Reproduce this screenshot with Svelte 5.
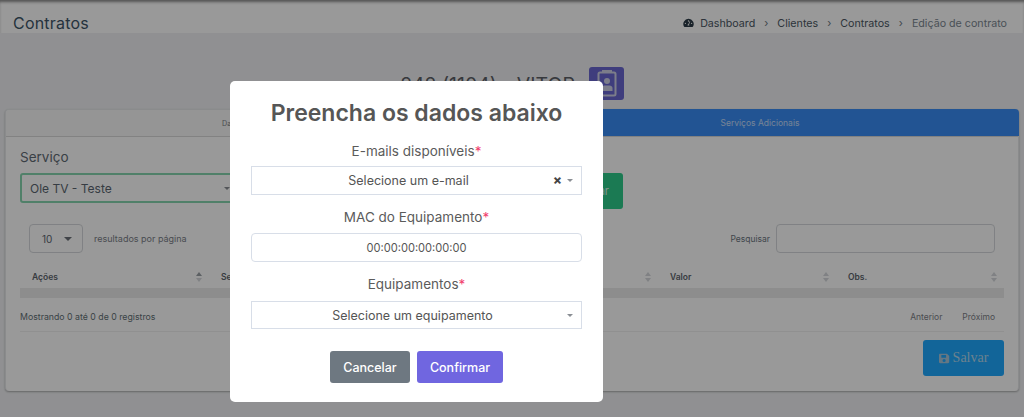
<script>
  const heads = [
    { label: 'Ações', up: true },
    { label: 'Serviço' },
    { label: '' },
    { label: '' },
    { label: 'Valor' },
    { label: 'Obs.' }
  ];
</script>

<div class="page">
  <header class="topbar">
    <h1>Contratos</h1>
    <nav class="crumbs">
      <svg class="gauge" viewBox="0 0 16 14" width="11" height="10"><path fill="#2a3a46" d="M8 1a7.500 7.500 0 0 0-6.600 11.200c.2.300.5.500.9.500h11.400c.4 0 .7-.2.9-.5A7.500 7.500 0 0 0 8 1zm0 2a1 1 0 1 1 0 2 1 1 0 0 1 0-2zM3.500 8.500a1 1 0 1 1 0-2 1 1 0 0 1 0 2zm5.600 2.200H6.900a1.400 1.400 0 0 1 .8-2l2-4.400.9.400-1.900 4.400c.5.400.6 1 .4 1.600zm3.400-2.200a1 1 0 1 1 0-2 1 1 0 0 1 0 2z"/></svg>
      <span>Dashboard</span><i>›</i><span>Clientes</span><i>›</i><span>Contratos</span><i>›</i><span class="muted">Edição de contrato</span>
    </nav>
  </header>

  <div class="client">
    <span class="client-name">242 (1104) - VITOR</span>
    <span class="badge">
      <svg viewBox="0 0 20 27" width="20" height="27" fill="none"><rect x="1.500" y="2.500" width="17" height="23" rx="1.500" stroke="#cfd0e6" stroke-width="2"/><path d="M6 2.500V1h8v1.500" stroke="#cfd0e6" stroke-width="2"/><circle cx="10" cy="11" r="3" fill="#cfd0e6"/><path d="M4.500 21v-3c0-1.500 1.500-2.500 3-2.500h5c1.500 0 3 1 3 2.500v3z" fill="#cfd0e6"/></svg>
    </span>
  </div>

  <section class="card">
    <div class="tabs">
      <div class="tab">Dados do contrato</div>
      <div class="tab active">Serviços Adicionais</div>
    </div>
    <div class="card-body">
      <div class="service-row">
        <div class="service-field">
          <div class="service-label">Serviço</div>
          <div class="service-select"><span>Ole TV - Teste</span><b class="caret small"></b></div>
        </div>
        <button class="add">Adicionar</button>
      </div>

      <div class="controls">
        <div class="length"><span>10</span><b class="caret"></b></div>
        <span class="per-page">resultados por página</span>
        <span class="search-label">Pesquisar</span>
        <div class="search"></div>
      </div>

      <div class="thead">
        {#each heads as h}
          <div class="th">
            <span>{h.label}</span>
            <span class="sort"><b class:up={h.up}></b><b></b></span>
          </div>
        {/each}
      </div>
      <div class="empty-row"></div>
      <div class="tfoot">
        <span>Mostrando 0 até 0 de 0 registros</span>
        <span class="pager"><span>Anterior</span><span>Próximo</span></span>
      </div>
      <div class="actions">
        <button class="save">
          <svg viewBox="0 0 14 14" width="11" height="11"><path fill="#a9c6da" fill-rule="evenodd" d="M1.500 1h8.700L13 3.800v7.700c0 .8-.7 1.500-1.500 1.500h-10C.7 13 0 12.300 0 11.500v-9C0 1.700.7 1 1.500 1zM3 2.500V6h6V2.500zM6.500 7.500a2 2 0 1 0 0 4 2 2 0 0 0 0-4z"/></svg>
          Salvar
        </button>
      </div>
    </div>
  </section>
</div>

<div class="overlay">
  <div class="modal">
    <h2>Preencha os dados abaixo</h2>
    <label class="lbl">E-mails disponíveis<em>*</em></label>
    <div class="sel first">
      <span>Selecione um e-mail</span>
      <span class="sel-icons"><b class="x">×</b><b class="caret small"></b></span>
    </div>
    <label class="lbl">MAC do Equipamento<em>*</em></label>
    <div class="inp">00:00:00:00:00:00</div>
    <label class="lbl">Equipamentos<em>*</em></label>
    <div class="sel short">
      <span>Selecione um equipamento</span>
      <span class="sel-icons"><b class="caret small"></b></span>
    </div>
    <div class="btns">
      <button class="cancel">Cancelar</button>
      <button class="confirm">Confirmar</button>
    </div>
  </div>
</div>

<style>
  :global(body) {
    margin: 0;
    background: #f0f1f3;
    font-family: "Inter", "Open Sans", sans-serif;
    overflow: hidden;
  }
  .page { height: 417px; color: #4a5560; }
  .topbar {
    height: 33px;
    background: #fff;
    box-sizing: border-box;
    padding: 13px 17px 0 13px;
    display: flex;
    align-items: center;
    justify-content: space-between;
    box-shadow: inset 0 3px 3px -1px rgba(0,0,0,.45);
  }
  h1 { margin: 0; font-size: 16px; font-weight: 400; color: #3d5568; letter-spacing: .2px; }
  .crumbs { display: flex; align-items: center; font-size: 10.700px; color: #4b5763; }
  .crumbs i { font-style: normal; margin: 0 9px; color: #6b7680; }
  .crumbs .gauge { margin-right: 6px; }
  .crumbs .muted { color: #7c8791; }
  .client {
    height: 76px;
    box-sizing: border-box;
    padding: 34px 400px 0 0;
    display: flex;
    justify-content: flex-end;
    align-items: flex-start;
    gap: 14px;
  }
  .client-name { font-size: 19.500px; color: #5c5f66; margin-top: 5px; line-height: 26px; }
  .badge {
    width: 35px;
    height: 33px;
    border-radius: 3px;
    background: #6a67d0;
    display: flex;
    align-items: center;
    justify-content: center;
  }
  .card {
    margin: 0 5px;
    height: 282px;
    background: #fff;
    border-radius: 4px;
    box-sizing: border-box;
    box-shadow: 0 1px 2px rgba(0,0,0,.3);
    border: 1px solid #e6e8ea;
    border-bottom: 0;
  }
  .tabs { display: grid; grid-template-columns: 495px 1fr; height: 26px; border-bottom: 1px solid #d9d9d9; }
  .tab { background: #f8f8f8; font-size: 7.200px; color: #7a7f86; display: flex; align-items: center; justify-content: center; border-radius: 4px 0 0 0; }
  .tab.active { background: #3a8df6; color: #c5dcf9; font-size: 8.500px; border-radius: 0 4px 0 0; margin-top: -1px; margin-right: -1px; }
  .card-body { padding: 0 14px; }
  .service-row { display: flex; align-items: flex-end; justify-content: space-between; width: 603px; height: 72px; }
  .service-field { width: 220px; }
  .service-label { font-size: 13.500px; color: #5f6b75; margin-bottom: 8px; line-height: 16px; }
  .service-select {
    height: 30px;
    box-sizing: border-box;
    border: 2px solid #86d6af;
    border-radius: 3px;
    font-size: 12px;
    color: #5a6570;
    padding: 0 8px;
    display: flex;
    align-items: center;
    justify-content: space-between;
    margin-bottom: 6px;
  }
  .add {
    width: 80px;
    height: 36px;
    border: 0;
    border-radius: 3px;
    background: #2dcb8b;
    color: #d8f5e9;
    font: 11px "Inter", sans-serif;
    text-align: right;
    padding: 0 14px 0 0;
  }
  .controls { display: flex; align-items: center; height: 29px; margin-top: 15px; padding: 0 9px; }
  .length {
    width: 54px;
    height: 29px;
    box-sizing: border-box;
    border: 1px solid #d5d8dc;
    border-radius: 4px;
    display: flex;
    align-items: center;
    justify-content: space-between;
    padding: 0 10px 0 12px;
    font-size: 10px;
    color: #5a6570;
  }
  .per-page { margin-left: 11px; font-size: 9px; color: #7b8088; }
  .search-label { margin-left: auto; margin-right: 6px; font-size: 8.500px; color: #6a7580; }
  .search { width: 219px; height: 29px; box-sizing: border-box; border: 1px solid #d5d8dc; border-radius: 4px; }
  .caret { width: 0; height: 0; border: 4px solid transparent; border-top-color: #6c7178; border-bottom: 0; display: block; }
  .caret.small { border-width: 3.500px; border-top-color: #8a8e94; border-bottom: 0; }
  .thead { display: grid; grid-template-columns: 189px 179px 179px 91px 178px 1fr; margin-top: 13px; height: 22px; }
  .th { display: flex; align-items: center; justify-content: space-between; padding: 0 7px 0 12px; font-size: 8.500px; font-weight: 600; color: #5d646c; }
  .sort { display: flex; flex-direction: column; gap: 2px; }
  .sort b { width: 0; height: 0; border: 3px solid transparent; border-top: 0; border-bottom: 4px solid #d5d8dc; display: block; }
  .sort b.up { border-bottom-color: #9aa0a6; }
  .sort b:last-child { transform: scaleY(-1); }
  .empty-row { height: 10px; background: #ececec; }
  .tfoot {
    display: flex;
    align-items: center;
    justify-content: space-between;
    height: 34px;
    box-sizing: border-box;
    padding-top: 4px;
    border-bottom: 1px solid #f0f0f0;
    font-size: 8.750px;
    color: #5f7075;
  }
  .pager { display: flex; gap: 20px; padding-right: 9px; color: #7d8187; font-size: 8.500px; }
  .actions { display: flex; justify-content: flex-end; padding-top: 8px; }
  .save {
    width: 81px;
    height: 36px;
    border: 0;
    border-radius: 3px;
    background: #1ea9ff;
    color: #b4d8ee;
    font: 14px "Liberation Serif", serif;
    display: flex;
    align-items: center;
    justify-content: center;
    gap: 3px;
  }

  .overlay {
    position: fixed;
    inset: 0;
    background: rgba(0,0,0,.4);
    display: flex;
    align-items: flex-start;
    padding: 81px 0 0 230px;
    box-sizing: border-box;
  }
  .modal {
    width: 373px;
    height: 321px;
    box-sizing: border-box;
    padding: 0 21px;
    background: #fff;
    border-radius: 5px;
    color: #545454;
    text-align: center;
  }
  h2 { margin: 0; padding-top: 16px; font-size: 23px; line-height: 32px; font-weight: 600; color: #565656; }
  .lbl { display: block; font-size: 13.500px; line-height: 20px; margin-top: 12px; color: #5b5b5b; }
  .lbl em { color: #f1416c; font-style: normal; }
  .sel, .inp {
    margin-top: 5px;
    box-sizing: border-box;
    height: 29px;
    border: 1px solid #d8dee8;
    display: flex;
    align-items: center;
    justify-content: center;
    font-size: 12.500px;
    color: #555;
    position: relative;
  }
  .sel.first { padding-right: 16px; }
  .sel.short { height: 28px; margin-top: 7px; padding-right: 8px; }
  .inp { border-radius: 4px; font-size: 11.100px; margin-top: 6px; }
  .sel-icons { position: absolute; right: 8px; top: 0; bottom: 0; display: flex; align-items: center; gap: 5px; }
  .x { font-size: 13px; font-weight: 800; color: #444; line-height: 1; margin-top: -2px; }
  .btns { display: flex; justify-content: center; gap: 7px; margin-top: 22px; }
  .btns button { height: 32px; border: 0; border-radius: 3px; color: #fff; font: 500 12.500px "Inter", sans-serif; }
  .cancel { width: 80px; background: #6e7881; }
  .confirm { width: 86px; background: #7066e0; }
</style>
